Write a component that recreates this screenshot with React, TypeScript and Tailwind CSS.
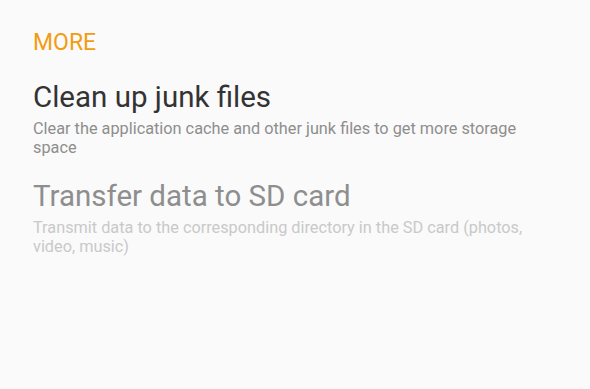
const items = [
    {
        title: "Clean up junk files",
        desc: "Clear the application cache and other junk files to get more storage space",
        enabled: true
    },
    {
        title: "Transfer data to SD card",
        desc: "Transmit data to the corresponding directory in the SD card (photos, video, music)",
        enabled: false
    }
]

export default function App() {
    return (
        <div className="min-h-screen w-full bg-[#fafafa] px-[33px] pt-[30px] font-['Roboto',sans-serif]">
            <h2 className="text-[23px] leading-[26px] text-[#f39c12]">MORE</h2>

            <div className="mt-[23px] flex flex-col gap-[21px]">
                {items.map((item) => (
                    <div key={item.title}>
                        <div
                            className={
                                item.enabled
                                    ? "text-[29.5px] leading-[36px] text-[#333333]"
                                    : "text-[29.5px] leading-[36px] text-[#8e8e8e]"
                            }
                        >
                            {item.title}
                        </div>
                        <p
                            className={
                                item.enabled
                                    ? "mt-[4px] text-[16.3px] leading-[19px] text-[#8e8e8e]"
                                    : "mt-[4px] text-[16.3px] leading-[19px] text-[#c9c9c9]"
                            }
                        >
                            {item.desc}
                        </p>
                    </div>
                ))}
            </div>
        </div>
    )
}
